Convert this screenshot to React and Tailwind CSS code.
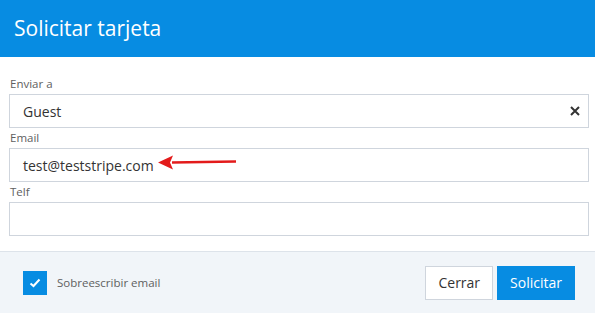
import React, { useState } from "react";

export default function App() {
  const [overwrite, setOverwrite] = useState(true);

  return (
    <div className="w-[595px] h-[313px] bg-white flex flex-col text-[#333]" style={{ fontFamily: '"Open Sans", sans-serif' }}>
      <div className="h-[57px] bg-[#078ce2] flex items-center px-[14px]">
        <h1 className="text-[21px] text-white leading-none">Solicitar tarjeta</h1>
      </div>

      <div className="flex-1 px-[9px] pt-[17px] pr-[6px]">
        <label className="block text-[11.5px] text-[#606060] leading-[20px] pl-px">Enviar a</label>
        <div className="h-[34px] border border-[#cfd5dd] flex items-center justify-between pl-[13px] pr-[8px]">
          <span className="text-[14px] text-[#333]">Guest</span>
          <svg width="10" height="10" viewBox="0 0 10 10">
            <path d="M1 1L9 9M9 1L1 9" stroke="#333" strokeWidth="2" />
          </svg>
        </div>

        <label className="block text-[11.5px] text-[#606060] leading-[20px] pl-px">Email</label>
        <div className="h-[34px] border border-[#cfd5dd] flex items-center pl-[13px] relative">
          <span className="text-[14px] text-[#333]">test@teststripe.com</span>
          <svg className="absolute left-[140px] top-[6px]" width="90" height="16" viewBox="0 0 90 16">
            <path d="M22 7.5L86 6.5" stroke="#e31b1b" strokeWidth="2.5" />
            <path d="M8 7.5L23 0.5L20 7.5L23 14.5Z" fill="#e31b1b" />
          </svg>
        </div>

        <label className="block text-[11.5px] text-[#606060] leading-[20px] pl-px">Telf</label>
        <div className="h-[34px] border border-[#cfd5dd]"></div>
      </div>

      <div className="h-[62px] bg-[#f1f5f9] border-t border-[#dde3ea] flex items-center justify-between pl-[23px] pr-[20px]">
        <label className="flex items-center gap-[10px] cursor-pointer" onClick={() => setOverwrite(!overwrite)}>
          <span className="w-[24px] h-[24px] bg-[#078ce2] flex items-center justify-center">
            {overwrite && (
              <svg width="12" height="10" viewBox="0 0 12 10">
                <path d="M1.5 5.5L4.5 8L10.5 1.5" stroke="white" strokeWidth="2" fill="none" />
              </svg>
            )}
          </span>
          <span className="text-[11.5px] text-[#606060]">Sobreescribir email</span>
        </label>
        <div className="flex gap-[4px]">
          <button className="h-[34px] px-[12px] bg-white border border-[#cfd5dd] text-[14px] text-[#333]">Cerrar</button>
          <button className="h-[34px] px-[13px] bg-[#078ce2] text-[14px] text-white">Solicitar</button>
        </div>
      </div>
    </div>
  );
}
